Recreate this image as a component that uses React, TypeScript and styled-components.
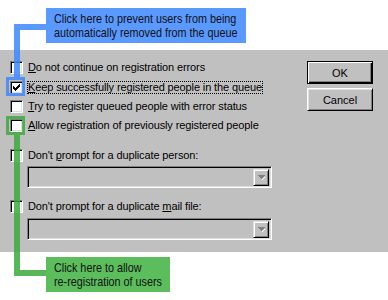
import React from "react";
import styled, { createGlobalStyle } from "styled-components";

const Global = createGlobalStyle`
  html, body { margin: 0; padding: 0; background: #ffffff; }
  body { font-family: "Liberation Sans", Arial, sans-serif; }
`;

const Page = styled.div`
  position: relative;
  width: 388px;
  height: 300px;
  overflow: hidden;
  background: #ffffff;
`;

const TopSpace = styled.div`
  height: 50px;
`;

const Panel = styled.div`
  box-sizing: border-box;
  height: 202px;
  background: #c0c0c0;
  padding: 11px 15px 0 10px;
  display: grid;
  grid-template-columns: 1fr 66px;
  font-family: "Liberation Sans", Arial, sans-serif;
  font-size: 11px;
  color: #000;
`;

const Options = styled.div`
  display: flex;
  flex-direction: column;
`;

const Row = styled.div<{ $mt?: number }>`
  display: flex;
  align-items: center;
  gap: 5px;
  height: 13px;
  margin-top: ${(p) => p.$mt ?? 0}px;
`;

const Box = styled.span`
  box-sizing: border-box;
  width: 13px;
  height: 13px;
  flex: none;
  background: #ffffff;
  border: 1px solid;
  border-color: #808080 #ffffff #ffffff #808080;
  box-shadow: inset 1px 1px 0 #000000, inset -1px -1px 0 #dfdfdf;
  display: flex;
  align-items: center;
  justify-content: center;
`;

const Label = styled.span<{ $focus?: boolean }>`
  line-height: 13px;
  white-space: nowrap;
  letter-spacing: -0.12px;
  padding: 0 1px;
  margin-left: -1px;
  outline: ${(p) => (p.$focus ? "1px dotted #000" : "none")};
  outline-offset: -1px;
  u { text-decoration: underline; text-underline-offset: 1px; }
`;

const Combo = styled.div<{ $mt: number }>`
  box-sizing: border-box;
  width: 245px;
  height: 22px;
  margin: ${(p) => p.$mt}px 0 0 17px;
  background: #c0c0c0;
  border: 1px solid;
  border-color: #808080 #ffffff #ffffff #808080;
  box-shadow: inset 1px 1px 0 #000000, inset -1px -1px 0 #dfdfdf;
  display: flex;
  justify-content: flex-end;
  align-items: center;
  padding-right: 2px;
`;

const ArrowBtn = styled.div`
  box-sizing: border-box;
  width: 16px;
  height: 17px;
  background: #c0c0c0;
  border: 1px solid;
  border-color: #dfdfdf #000000 #000000 #dfdfdf;
  box-shadow: inset 1px 1px 0 #ffffff, inset -1px -1px 0 #808080;
  display: flex;
  align-items: center;
  justify-content: center;
`;

const Buttons = styled.div`
  display: flex;
  flex-direction: column;
  gap: 4px;
`;

const Button = styled.div<{ $default?: boolean }>`
  box-sizing: border-box;
  height: 23px;
  display: flex;
  align-items: center;
  justify-content: center;
  background: #c0c0c0;
  font-size: 11px;
  border: 1px solid;
  border-color: ${(p) => (p.$default ? "#000 #000 #000 #000" : "#ffffff #000000 #000000 #ffffff")};
  box-shadow: ${(p) =>
    p.$default
      ? "inset 1px 1px 0 #ffffff, inset -1px -1px 0 #000000, inset -2px -2px 0 #808080"
      : "inset 1px 1px 0 #dfdfdf, inset -1px -1px 0 #808080"};
`;

const Callout = styled.div<{ $color: string; $left: number; $top: number; $w: number; $h: number }>`
  position: absolute;
  left: ${(p) => p.$left}px;
  top: ${(p) => p.$top}px;
  width: ${(p) => p.$w}px;
  height: ${(p) => p.$h}px;
  box-sizing: border-box;
  background: ${(p) => p.$color};
  padding: 4px 0 0 8px;
  font-family: "Liberation Sans", Arial, sans-serif;
  font-size: 13px;
  line-height: 14px;
  color: #111;
  white-space: nowrap;
`;

const CalloutText = styled.span`
  display: inline-block;
  transform: scaleX(0.83);
  transform-origin: left top;
`;

const Line = styled.div<{ $color: string; $left: number; $top: number; $w: number; $h: number }>`
  position: absolute;
  left: ${(p) => p.$left}px;
  top: ${(p) => p.$top}px;
  width: ${(p) => p.$w}px;
  height: ${(p) => p.$h}px;
  background: ${(p) => p.$color};
`;

const Frame = styled.div<{ $color: string; $left: number; $top: number }>`
  position: absolute;
  left: ${(p) => p.$left}px;
  top: ${(p) => p.$top}px;
  width: 19px;
  height: 19px;
  box-sizing: border-box;
  border: 3px solid ${(p) => p.$color};
`;

const BLUE_LINE = "rgba(61,135,255,0.85)";
const BLUE_BOX = "#5a99ff";
const GREEN_LINE = "rgba(60,170,60,0.85)";
const GREEN_BOX = "#5cbd5c";

const Check = () => (
  <svg width="7" height="7" viewBox="0 0 7 7">
    <path d="M0 2h1v1h1v1h1V3h1V2h1V1h1V0h1v3H6v1H5v1H4v1H3v1H2V6H1V5H0z" fill="#000" />
  </svg>
);

const DownArrow = () => (
  <svg width="9" height="6" viewBox="0 0 9 6">
    <path d="M1 1h7v1H7v1H6v1H5v1H4V4H3V3H2V2H1z" fill="#808080" />
    <path d="M5 5h1V4h1V3h1v1H7v1H6v1H5z" fill="#ffffff" />
  </svg>
);

export default function App() {
  return (
    <Page>
      <Global />
      <TopSpace />
      <Panel>
        <Options>
          <Row>
            <Box />
            <Label>
              <u>D</u>o not continue on registration errors
            </Label>
          </Row>
          <Row $mt={7}>
            <Box>
              <Check />
            </Box>
            <Label $focus>
              <u>K</u>eep successfully registered people in the queue
            </Label>
          </Row>
          <Row $mt={6}>
            <Box />
            <Label>
              <u>T</u>ry to register queued people with error status
            </Label>
          </Row>
          <Row $mt={6}>
            <Box />
            <Label>
              <u>A</u>llow registration of previously registered people
            </Label>
          </Row>
          <Row $mt={17}>
            <Box />
            <Label>
              Don't <u>p</u>rompt for a duplicate person:
            </Label>
          </Row>
          <Combo $mt={4}>
            <ArrowBtn>
              <DownArrow />
            </ArrowBtn>
          </Combo>
          <Row $mt={12}>
            <Box />
            <Label>
              Don't prompt for a duplicate <u>m</u>ail file:
            </Label>
          </Row>
          <Combo $mt={5}>
            <ArrowBtn>
              <DownArrow />
            </ArrowBtn>
          </Combo>
        </Options>
        <Buttons>
          <Button $default>OK</Button>
          <Button>Cancel</Button>
        </Buttons>
      </Panel>

      <Callout $color={BLUE_BOX} $left={46} $top={8} $w={200} $h={35}>
        <CalloutText>
          Click here to prevent users from being
          <br />
          automatically removed from the queue
        </CalloutText>
      </Callout>
      <Line $color={BLUE_LINE} $left={14} $top={24} $w={32} $h={6} />
      <Line $color={BLUE_LINE} $left={14} $top={30} $w={6} $h={47} />
      <Frame $color={BLUE_LINE} $left={6} $top={77} />

      <Frame $color={GREEN_LINE} $left={6} $top={116} />
      <Line $color={GREEN_LINE} $left={14} $top={135} $w={6} $h={141} />
      <Line $color={GREEN_LINE} $left={20} $top={270} $w={26} $h={6} />
      <Callout $color={GREEN_BOX} $left={46} $top={257} $w={124} $h={35}>
        <CalloutText>
          Click here to allow
          <br />
          re-registration of users
        </CalloutText>
      </Callout>
    </Page>
  );
}
